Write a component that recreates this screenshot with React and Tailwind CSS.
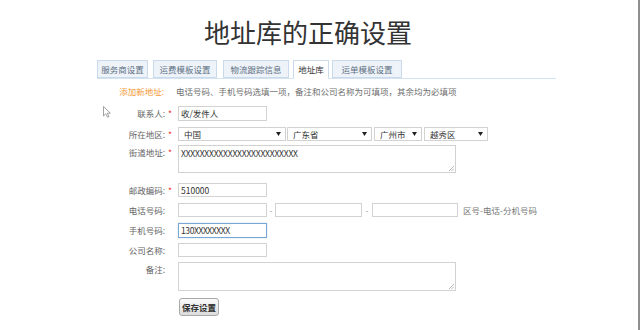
import React from "react";

function Box({ w, h = 14, focus = false, children }) {
  return (
    <div
      className={`flex items-center px-[2px] bg-white text-[8.5px] leading-none text-[#333] border ${
        focus ? "border-[#7aa6d6] shadow-[0_0_1px_#9cc0e6]" : "border-[#d2d2d2]"
      }`}
      style={{ width: w, height: h }}
    >
      {children}
    </div>
  );
}

function Select({ w, children }) {
  return (
    <div
      className="flex items-center justify-between h-[14px] pl-[5px] pr-[4px] bg-white border border-[#d2d2d2] text-[8.5px] leading-none text-[#333]"
      style={{ width: w }}
    >
      <span>{children}</span>
      <svg width="5" height="4" viewBox="0 0 5 4">
        <polygon points="0,0 5,0 2.5,4" fill="#222" />
      </svg>
    </div>
  );
}

function Area({ w, h, children }) {
  return (
    <div
      className="relative bg-white border border-[#d2d2d2] px-[2px] pt-[2px] text-[8.5px] leading-[11px] text-[#333]"
      style={{ width: w, height: h }}
    >
      {children}
      <svg className="absolute right-[1px] bottom-[1px]" width="6" height="6" viewBox="0 0 6 6">
        <line x1="6" y1="1" x2="1" y2="6" stroke="#bbb" strokeWidth="1" />
        <line x1="6" y1="3.5" x2="3.5" y2="6" stroke="#bbb" strokeWidth="1" />
      </svg>
    </div>
  );
}

function Label({ text, star, top = false }) {
  return (
    <>
      <div
        className={`w-[75px] shrink-0 text-right text-[8.5px] text-[#666] ${
          top ? "h-[14px] leading-[14px]" : "leading-none"
        }`}
      >
        {text}
      </div>
      <div
        className={`w-[13px] shrink-0 pl-[3px] text-[8.5px] text-[#e33] ${
          top ? "h-[14px] leading-[14px]" : "leading-none"
        }`}
      >
        {star ? "*" : ""}
      </div>
    </>
  );
}

export default function App() {
  const tabBase =
    "h-[18px] flex items-center justify-center text-[8.5px] leading-none border border-[#c9daeb]";
  return (
    <div className="relative w-[640px] h-[330px] bg-white overflow-hidden border-r-2 border-[#8f8f8f] font-['Noto_Sans_CJK_SC',sans-serif]">
      <div className="h-[60px] w-[616px] pt-[4px] flex items-center justify-center text-[26px] leading-none text-[#333]">
        地址库的正确设置
      </div>

      <div className="ml-[97px] w-[459px] h-[19px] flex items-end border-b border-[#d3e3f2]">
        <div className={`${tabBase} w-[51px] bg-[#edf3f9] text-[#5f7082]`}>服务商设置</div>
        <div className={`${tabBase} ml-[5px] w-[64px] bg-[#edf3f9] text-[#5f7082]`}>运费模板设置</div>
        <div className={`${tabBase} ml-[6px] w-[66px] bg-[#edf3f9] text-[#5f7082]`}>物流跟踪信息</div>
        <div className={`${tabBase} ml-[4px] w-[36px] h-[19px] -mb-px bg-white border-b-white text-[#333]`}>地址库</div>
        <div className={`${tabBase} ml-[3px] w-[70px] bg-[#edf3f9] text-[#5f7082]`}>运单模板设置</div>
      </div>

      <div className="ml-[90px] flex flex-col">
        <div className="mt-[5px] h-[14px] flex items-center">
          <div className="w-[75px] shrink-0 pr-[1px] text-right text-[8.5px] leading-none text-[#f39a36]">添加新地址:</div>
          <div className="w-[11px] shrink-0" />
          <div className="text-[8.5px] leading-none text-[#6f6f6f]">
            电话号码、手机号码选填一项，备注和公司名称为可填项，其余均为必填项
          </div>
        </div>

        <div className="mt-[8px] flex items-center">
          <Label text="联系人:" star />
          <Box w={89} h={15}>收/发件人</Box>
        </div>

        <div className="mt-[6px] flex items-center">
          <Label text="所在地区:" star />
          <Select w={108}>中国</Select>
          <div className="ml-[1px]"><Select w={85}>广东省</Select></div>
          <div className="ml-[2px]"><Select w={48}>广州市</Select></div>
          <div className="ml-[2px]"><Select w={64}>越秀区</Select></div>
        </div>

        <div className="mt-[4px] flex items-start">
          <Label text="街道地址:" star top />
          <Area w={278} h={28}>
            <span className="tracking-[-0.2px]">XXXXXXXXXXXXXXXXXXXXXXXXX</span>
          </Area>
        </div>

        <div className="mt-[10px] flex items-center">
          <Label text="邮政编码:" star />
          <Box w={89}>510000</Box>
        </div>

        <div className="mt-[6px] flex items-center">
          <Label text="电话号码:" />
          <Box w={89} />
          <div className="w-[8px] text-center text-[8.5px] leading-none text-[#999]">-</div>
          <Box w={87} />
          <div className="w-[10px] text-center text-[8.5px] leading-none text-[#999]">-</div>
          <Box w={86} />
          <div className="ml-[5px] text-[8.5px] leading-none text-[#777]">区号-电话-分机号码</div>
        </div>

        <div className="mt-[6px] flex items-center">
          <Label text="手机号码:" />
          <Box w={89} h={15} focus>
            <span className="tracking-[-0.4px]">130XXXXXXXX</span>
          </Box>
        </div>

        <div className="mt-[5px] flex items-center">
          <Label text="公司名称:" />
          <Box w={89} />
        </div>

        <div className="mt-[5px] flex items-start">
          <Label text="备注:" top />
          <Area w={278} h={29} />
        </div>

        <div className="mt-[7px] flex items-center">
          <div className="w-[89px] shrink-0" />
          <div className="w-[40px] h-[18px] flex items-center justify-center rounded-[3px] border border-[#a9a9a9] bg-gradient-to-b from-[#fafafa] to-[#dcdcdc] text-[8.5px] font-bold leading-none text-[#333]">
            保存设置
          </div>
        </div>
      </div>

      <svg className="absolute left-[103px] top-[106px]" width="8" height="12" viewBox="0 0 8 12">
        <path d="M0.5 0.5 L0.5 10 L2.8 7.8 L4.5 11.3 L6 10.6 L4.3 7.2 L7.3 7.2 Z" fill="#fff" stroke="#8a8a8a" strokeWidth="0.8" />
      </svg>
    </div>
  );
}
